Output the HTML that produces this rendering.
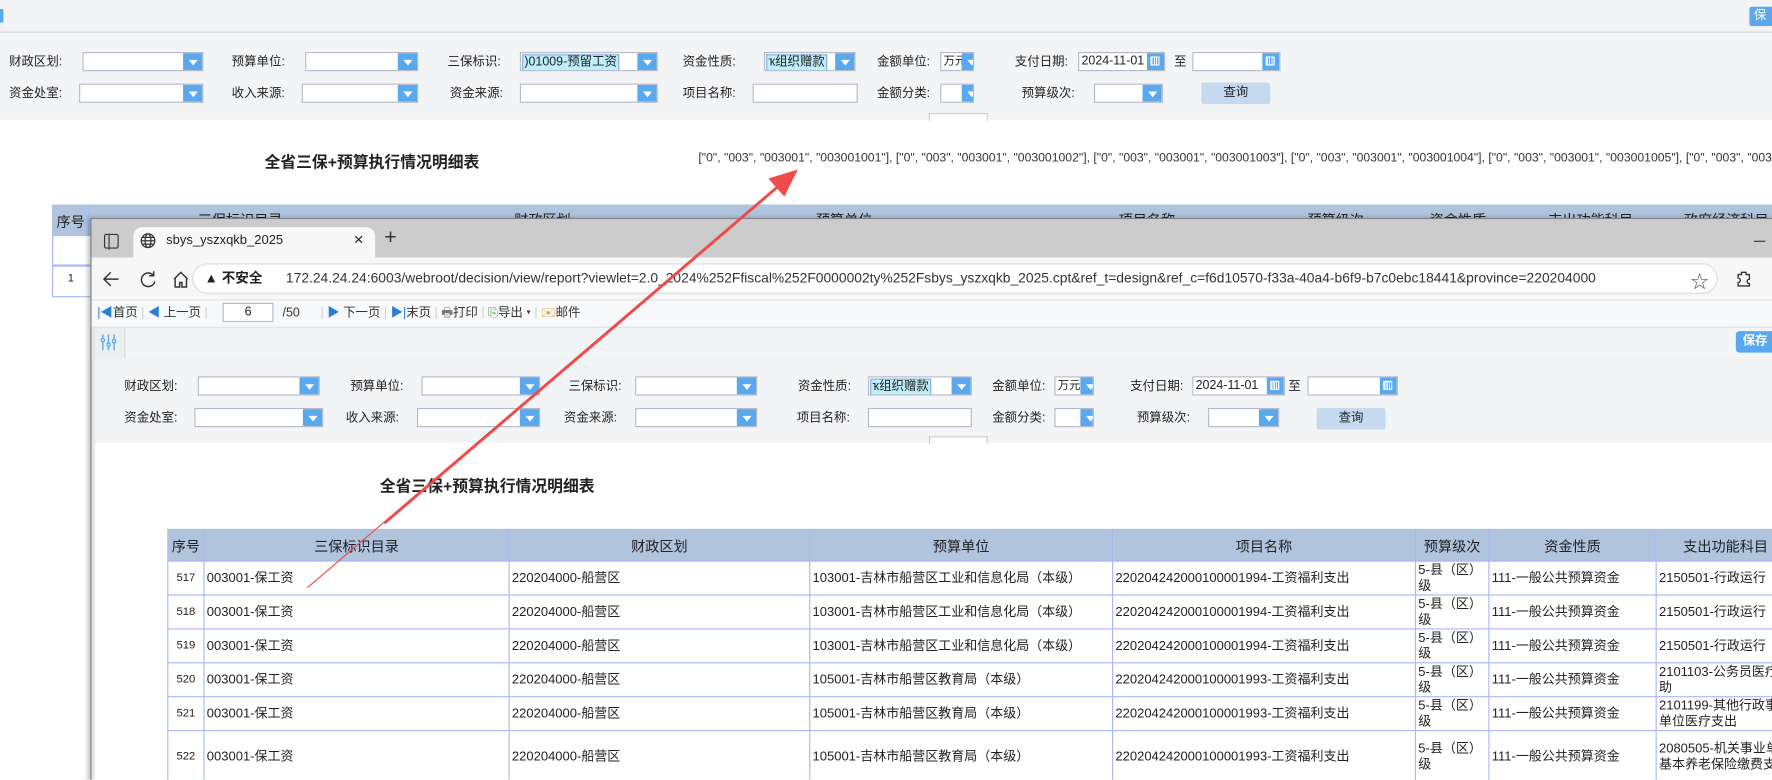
<!DOCTYPE html>
<html><head><meta charset="utf-8">
<style>
html,body{margin:0;padding:0;width:1772px;height:779px;overflow:hidden;background:#fff}
#s{position:absolute;left:0;top:0;width:1568px;height:690px;transform:scale(1.13010);transform-origin:0 0;font-family:"Liberation Sans","Noto Sans CJK SC",sans-serif;color:#222;overflow:hidden}
.a{position:absolute}
.l{position:absolute;font-size:11px;line-height:18px;white-space:nowrap;color:#222}
.sel{position:absolute;height:17px;background:#fff;border:1px solid #b4b8c8;box-sizing:border-box;overflow:hidden}
.sel .b{position:absolute;right:0;top:0;width:17px;height:15px;background:#5aa8ee}
.sel .b:after{content:"";position:absolute;left:5px;top:6px;border-left:4px solid transparent;border-right:4px solid transparent;border-top:5px solid #fff}
.sel .t{position:absolute;left:1px;top:1px;font-size:11px;line-height:13px;padding:0 1px;white-space:nowrap}
.cal{position:absolute;right:0;top:0;width:15px;height:15px;background:#5aa8ee}
.cal:after{content:"";position:absolute;left:3px;top:3px;width:8px;height:8px;border:1px solid #fff;box-sizing:border-box;background:repeating-linear-gradient(90deg,#fff 0 1px,transparent 1px 2px)}
.btnq{position:absolute;height:19px;background:#c5d9f1;border-radius:2px;font-size:11px;line-height:19px;text-align:center}
table{border-collapse:collapse;position:absolute;table-layout:fixed}
td{border:1px solid #a9b8f5;font-size:11.5px;line-height:14px;padding:0 2px;white-space:nowrap;overflow:hidden;vertical-align:middle}
th{background:#b0c4de;border:1px solid #a9b8f5;font-weight:normal;font-size:12.5px;height:27px;padding:0}
.w td{white-space:normal}
</style></head><body><div id="s">

<div class="a" style="left:0;top:0;width:1568px;height:28px;background:#f2f3f5;border-bottom:1px solid #d0d2d8"></div>
<div class="a" style="left:0;top:8px;width:3px;height:12px;background:#5aa8ee"></div>
<div class="a" style="left:1548px;top:6px;width:22px;height:17px;background:#5aa8ee;border-radius:2px;color:#fff;font-size:11px;line-height:17px;padding-left:4px">保</div>
<div class="a" style="left:0;top:29px;width:1568px;height:77px;background:#f3f4f6"></div>
<div class="a" style="left:822px;top:100px;width:50px;height:6px;border:1px solid #ccc;border-bottom:none;background:#fff"></div>

<div class="l" style="left:8px;top:46px">财政区划:</div>
<div class="sel" style="left:73px;top:46px;width:107px"><div class="b"></div></div>
<div class="l" style="left:205px;top:46px">预算单位:</div>
<div class="sel" style="left:270px;top:46px;width:100px"><div class="b"></div></div>
<div class="l" style="left:396px;top:46px">三保标识:</div>
<div class="sel" style="left:460px;top:46px;width:122px"><div class="t" style="background:#bdf0fb;border:1px solid #8ad">)01009-预留工资</div><div class="b"></div></div>
<div class="l" style="left:604px;top:46px">资金性质:</div>
<div class="sel" style="left:676px;top:46px;width:81px"><div class="t" style="background:#bdf0fb;border:1px solid #8ad">ҡ组织赠款</div><div class="b"></div></div>
<div class="l" style="left:776px;top:46px">金额单位:</div>
<div class="sel" style="left:832px;top:46px;width:30px"><div class="t" style="font-size:10px">万元</div><div class="b" style="width:10px"></div></div>
<div class="l" style="left:898px;top:46px">支付日期:</div>
<div class="sel" style="left:954px;top:46px;width:77px"><div class="t">2024-11-01</div><div class="cal"></div></div>
<div class="l" style="left:1039px;top:46px">至</div>
<div class="sel" style="left:1055px;top:46px;width:78px"><div class="cal"></div></div>

<div class="l" style="left:8px;top:74px">资金处室:</div>
<div class="sel" style="left:70px;top:74px;width:110px"><div class="b"></div></div>
<div class="l" style="left:205px;top:74px">收入来源:</div>
<div class="sel" style="left:267px;top:74px;width:103px"><div class="b"></div></div>
<div class="l" style="left:398px;top:74px">资金来源:</div>
<div class="sel" style="left:460px;top:74px;width:122px"><div class="b"></div></div>
<div class="l" style="left:604px;top:74px">项目名称:</div>
<div class="sel" style="left:666px;top:74px;width:93px"></div>
<div class="l" style="left:776px;top:74px">金额分类:</div>
<div class="sel" style="left:832px;top:74px;width:30px"><div class="b" style="width:10px"></div></div>
<div class="l" style="left:904px;top:74px">预算级次:</div>
<div class="sel" style="left:968px;top:74px;width:61px"><div class="b"></div></div>
<div class="btnq" style="left:1063px;top:73px;width:61px">查询</div>

<div class="a" style="left:234px;top:134px;font-size:14px;font-weight:bold;line-height:18px">全省三保+预算执行情况明细表</div>
<div class="a" style="left:618px;top:133px;font-size:10.8px;line-height:14px;white-space:nowrap;color:#333">["0", "003", "003001", "003001001"], ["0", "003", "003001", "003001002"], ["0", "003", "003001", "003001003"], ["0", "003", "003001", "003001004"], ["0", "003", "003001", "003001005"], ["0", "003", "003001", "003001006"]</div>

<div class="a" style="left:46px;top:181px;width:1522px;height:27px;background:#b0c4de"></div>
<div class="a" style="left:50px;top:186px;font-size:12.5px">序号</div>
<div class="a" style="left:78px;top:181px;width:1px;height:27px;background:#a9b8f5"></div>
<div class="a" style="left:175px;top:184px;font-size:12.5px">三保标识目录</div>
<div class="a" style="left:455px;top:184px;font-size:12.5px">财政区划</div>
<div class="a" style="left:722px;top:184px;font-size:12.5px">预算单位</div>
<div class="a" style="left:990px;top:184px;font-size:12.5px">项目名称</div>
<div class="a" style="left:1157px;top:184px;font-size:12.5px">预算级次</div>
<div class="a" style="left:1265px;top:184px;font-size:12.5px">资金性质</div>
<div class="a" style="left:1370px;top:184px;font-size:12.5px">支出功能科目</div>
<div class="a" style="left:1490px;top:184px;font-size:12.5px">政府经济科目</div>
<div class="a" style="left:46px;top:208px;width:34px;height:27px;border:1px solid #a9b8f5;border-right:none;box-sizing:border-box"></div>
<div class="a" style="left:46px;top:235px;width:34px;height:28px;border:1px solid #a9b8f5;border-right:none;box-sizing:border-box"></div>
<div class="a" style="left:60px;top:241px;font-size:10px">1</div>

<div class="a" style="left:80px;top:193px;width:1490px;height:500px;background:#fff;border-left:1px solid #777;border-top:1px solid #777;box-shadow:-2px 0 4px rgba(0,0,0,.25)"></div>
<div class="a" style="left:81px;top:194px;width:1487px;height:34px;background:#cccccc"></div>
<div class="a" style="left:92px;top:207px;width:11px;height:11px;border:1.5px solid #333;border-radius:2px"></div>
<div class="a" style="left:92px;top:207px;width:4px;height:14px;border-right:1.5px solid #333"></div>
<div class="a" style="left:118px;top:201px;width:214px;height:27px;background:#f7f7f7;border-radius:8px 8px 0 0"></div>
<svg class="a" style="left:124px;top:206px" width="14" height="14" viewBox="0 0 14 14" fill="none" stroke="#333" stroke-width="1.1"><circle cx="7" cy="7" r="6"/><ellipse cx="7" cy="7" rx="2.6" ry="6"/><path d="M1 7h12M2 4h10M2 10h10"/></svg>
<div class="a" style="left:147px;top:205px;font-size:11.5px;line-height:16px">sbys_yszxqkb_2025</div>
<div class="a" style="left:313px;top:203px;font-size:15px;line-height:20px">×</div>
<div class="a" style="left:340px;top:200px;font-size:19px;line-height:22px;color:#333">+</div>
<div class="a" style="left:1552px;top:213px;width:10px;height:1px;background:#333"></div>
<div class="a" style="left:81px;top:228px;width:1487px;height:37px;background:#f7f7f7;border-bottom:1px solid #e2e2e2"></div>
<svg class="a" style="left:90px;top:238px" width="80" height="18" viewBox="0 0 80 18" fill="none" stroke="#333" stroke-width="1.3"><path d="M15 9H3M8 3L2 9l6 6"/><path d="M46 6a6 6 0 1 0 1 5M46 2v4h-4"/><path d="M64 9l6-6 6 6M65 8v8h4v-4h2v4h4V8"/></svg>
<div class="a" style="left:170px;top:233px;width:1350px;height:27px;background:#fff;border:1px solid #dcdcdc;border-radius:14px;box-sizing:border-box"></div>
<div class="a" style="left:181px;top:238px;font-size:12px;font-weight:bold;line-height:16px">▲ 不安全</div>
<div class="a" style="left:253px;top:238px;font-size:12.25px;line-height:16px;color:#333;white-space:nowrap">172.24.24.24:6003/webroot/decision/view/report?viewlet=2.0_2024%252Ffiscal%252F0000002ty%252Fsbys_yszxqkb_2025.cpt&amp;ref_t=design&amp;ref_c=f6d10570-f33a-40a4-b6f9-b7c0ebc18441&amp;province=220204000</div>
<div class="a" style="left:1496px;top:236px;font-size:16px;color:#555">☆</div>
<svg class="a" style="left:1535px;top:239px" width="16" height="16" viewBox="0 0 16 16" fill="none" stroke="#333" stroke-width="1.2"><path d="M6 2h4v2a2 2 0 1 1 0 0h3v4a2 2 0 1 0 0 4v2H3v-3a2 2 0 1 0 0-4V4h3z"/></svg>

<div class="a" style="left:81px;top:266px;width:1487px;height:23px;background:#f7f8fa"></div>
<div class="a" style="left:86px;top:268px;font-size:11px;line-height:18px;white-space:nowrap;color:#333"><span style="color:#2a7fd4">|◀</span>首页 <span style="color:#ccc">|</span> <span style="color:#2a7fd4">◀</span> 上一页 <span style="color:#ccc">|</span></div>
<div class="a" style="left:197px;top:268px;width:45px;height:17px;background:#fff;border:1px solid #b4b8c8;box-sizing:border-box;font-size:11px;text-align:center;line-height:15px">6</div>
<div class="a" style="left:250px;top:268px;font-size:11px;line-height:18px;white-space:nowrap;color:#333">/50 &nbsp;&nbsp;&nbsp;&nbsp; <span style="color:#ccc">|</span> <span style="color:#2a7fd4">▶</span> 下一页 <span style="color:#ccc">|</span> <span style="color:#2a7fd4">▶|</span>末页 <span style="color:#ccc">|</span> <span style="color:#777">🖶</span>打印 <span style="color:#ccc">|</span> <span style="color:#4a4">⎘</span>导出 ▾ <span style="color:#ccc">|</span> <span style="color:#e0a030">✉</span>邮件</div>
<div class="a" style="left:81px;top:289px;width:1487px;height:28px;background:#f3f4f6;border-top:1px solid #dde;border-bottom:1px solid #ccd"></div>
<div class="a" style="left:84px;top:290px;width:26px;height:27px;background:#eceef2;border-right:1px solid #d6d8de"></div>
<svg class="a" style="left:89px;top:296px" width="14" height="14" viewBox="0 0 14 14" stroke="#5aa8ee" stroke-width="1.2" fill="none"><path d="M2 0v14M7 0v14M12 0v14"/><circle cx="2" cy="5" r="1.5" fill="#fff"/><circle cx="7" cy="9" r="1.5" fill="#fff"/><circle cx="12" cy="6" r="1.5" fill="#fff"/></svg>
<div class="a" style="left:1536px;top:293px;width:40px;height:19px;background:#5aa8ee;border-radius:3px;color:#fff;font-size:11px;line-height:19px;padding-left:6px;font-weight:bold">保存</div>
<div class="a" style="left:81px;top:318px;width:1487px;height:74px;background:#f3f4f6"></div>
<div class="a" style="left:81px;top:290px;width:3px;height:400px;background:#e6e6e6"></div>
<div class="a" style="left:822px;top:386px;width:50px;height:6px;border:1px solid #ccc;border-bottom:none;background:#fff"></div>

<div class="l" style="left:110px;top:333px">财政区划:</div>
<div class="sel" style="left:175px;top:333px;width:108px"><div class="b"></div></div>
<div class="l" style="left:310px;top:333px">预算单位:</div>
<div class="sel" style="left:373px;top:333px;width:105px"><div class="b"></div></div>
<div class="l" style="left:503px;top:333px">三保标识:</div>
<div class="sel" style="left:562px;top:333px;width:108px"><div class="b"></div></div>
<div class="l" style="left:706px;top:333px">资金性质:</div>
<div class="sel" style="left:768px;top:333px;width:92px"><div class="t" style="background:#bdf0fb;border:1px solid #8ad">ҡ组织赠款</div><div class="b"></div></div>
<div class="l" style="left:878px;top:333px">金额单位:</div>
<div class="sel" style="left:933px;top:333px;width:35px"><div class="t" style="font-size:10px">万元</div><div class="b" style="width:11px"></div></div>
<div class="l" style="left:1000px;top:333px">支付日期:</div>
<div class="sel" style="left:1055px;top:333px;width:82px"><div class="t">2024-11-01</div><div class="cal"></div></div>
<div class="l" style="left:1140px;top:333px">至</div>
<div class="sel" style="left:1157px;top:333px;width:80px"><div class="cal"></div></div>

<div class="l" style="left:110px;top:361px">资金处室:</div>
<div class="sel" style="left:172px;top:361px;width:114px"><div class="b"></div></div>
<div class="l" style="left:306px;top:361px">收入来源:</div>
<div class="sel" style="left:369px;top:361px;width:109px"><div class="b"></div></div>
<div class="l" style="left:499px;top:361px">资金来源:</div>
<div class="sel" style="left:562px;top:361px;width:108px"><div class="b"></div></div>
<div class="l" style="left:705px;top:361px">项目名称:</div>
<div class="sel" style="left:768px;top:361px;width:92px"></div>
<div class="l" style="left:878px;top:361px">金额分类:</div>
<div class="sel" style="left:933px;top:361px;width:35px"><div class="b" style="width:11px"></div></div>
<div class="l" style="left:1006px;top:361px">预算级次:</div>
<div class="sel" style="left:1069px;top:361px;width:63px"><div class="b"></div></div>
<div class="btnq" style="left:1165px;top:361px;width:61px">查询</div>

<div class="a" style="left:336px;top:421px;font-size:14px;font-weight:bold;line-height:18px">全省三保+预算执行情况明细表</div>

<table style="left:148px;top:468px;width:1440px">
<colgroup><col style="width:32px"><col style="width:270px"><col style="width:266px"><col style="width:268px"><col style="width:268px"><col style="width:65px"><col style="width:148px"><col style="width:123px"></colgroup>
<tr><th>序号</th><th>三保标识目录</th><th>财政区划</th><th>预算单位</th><th>项目名称</th><th>预算级次</th><th>资金性质</th><th>支出功能科目</th></tr>
<tr class="w" style="height:30px"><td style="text-align:center;font-size:10px">517</td><td>003001-保工资</td><td>220204000-船营区</td><td>103001-吉林市船营区工业和信息化局（本级）</td><td>220204242000100001994-工资福利支出</td><td>5-县（区）级</td><td>111-一般公共预算资金</td><td>2150501-行政运行</td></tr>
<tr class="w" style="height:30px"><td style="text-align:center;font-size:10px">518</td><td>003001-保工资</td><td>220204000-船营区</td><td>103001-吉林市船营区工业和信息化局（本级）</td><td>220204242000100001994-工资福利支出</td><td>5-县（区）级</td><td>111-一般公共预算资金</td><td>2150501-行政运行</td></tr>
<tr class="w" style="height:30px"><td style="text-align:center;font-size:10px">519</td><td>003001-保工资</td><td>220204000-船营区</td><td>103001-吉林市船营区工业和信息化局（本级）</td><td>220204242000100001994-工资福利支出</td><td>5-县（区）级</td><td>111-一般公共预算资金</td><td>2150501-行政运行</td></tr>
<tr class="w" style="height:30px"><td style="text-align:center;font-size:10px">520</td><td>003001-保工资</td><td>220204000-船营区</td><td>105001-吉林市船营区教育局（本级）</td><td>220204242000100001993-工资福利支出</td><td>5-县（区）级</td><td>111-一般公共预算资金</td><td>2101103-公务员医疗补助</td></tr>
<tr class="w" style="height:30px"><td style="text-align:center;font-size:10px">521</td><td>003001-保工资</td><td>220204000-船营区</td><td>105001-吉林市船营区教育局（本级）</td><td>220204242000100001993-工资福利支出</td><td>5-县（区）级</td><td>111-一般公共预算资金</td><td>2101199-其他行政事业单位医疗支出</td></tr>
<tr class="w" style="height:46px"><td style="text-align:center;font-size:10px">522</td><td>003001-保工资</td><td>220204000-船营区</td><td>105001-吉林市船营区教育局（本级）</td><td>220204242000100001993-工资福利支出</td><td>5-县（区）级</td><td>111-一般公共预算资金</td><td>2080505-机关事业单位基本养老保险缴费支出</td></tr>
</table>

<svg class="a" style="left:0;top:0" width="1568" height="690"><path d="M272 520 L692 162" stroke="#f04a4a" stroke-width="1" fill="none"/><path d="M340 463 L692 162" stroke="#f04a4a" stroke-width="2.6" fill="none"/><polygon points="706,150 680,158 694,174" fill="#f04a4a"/></svg>
</div></body></html>
